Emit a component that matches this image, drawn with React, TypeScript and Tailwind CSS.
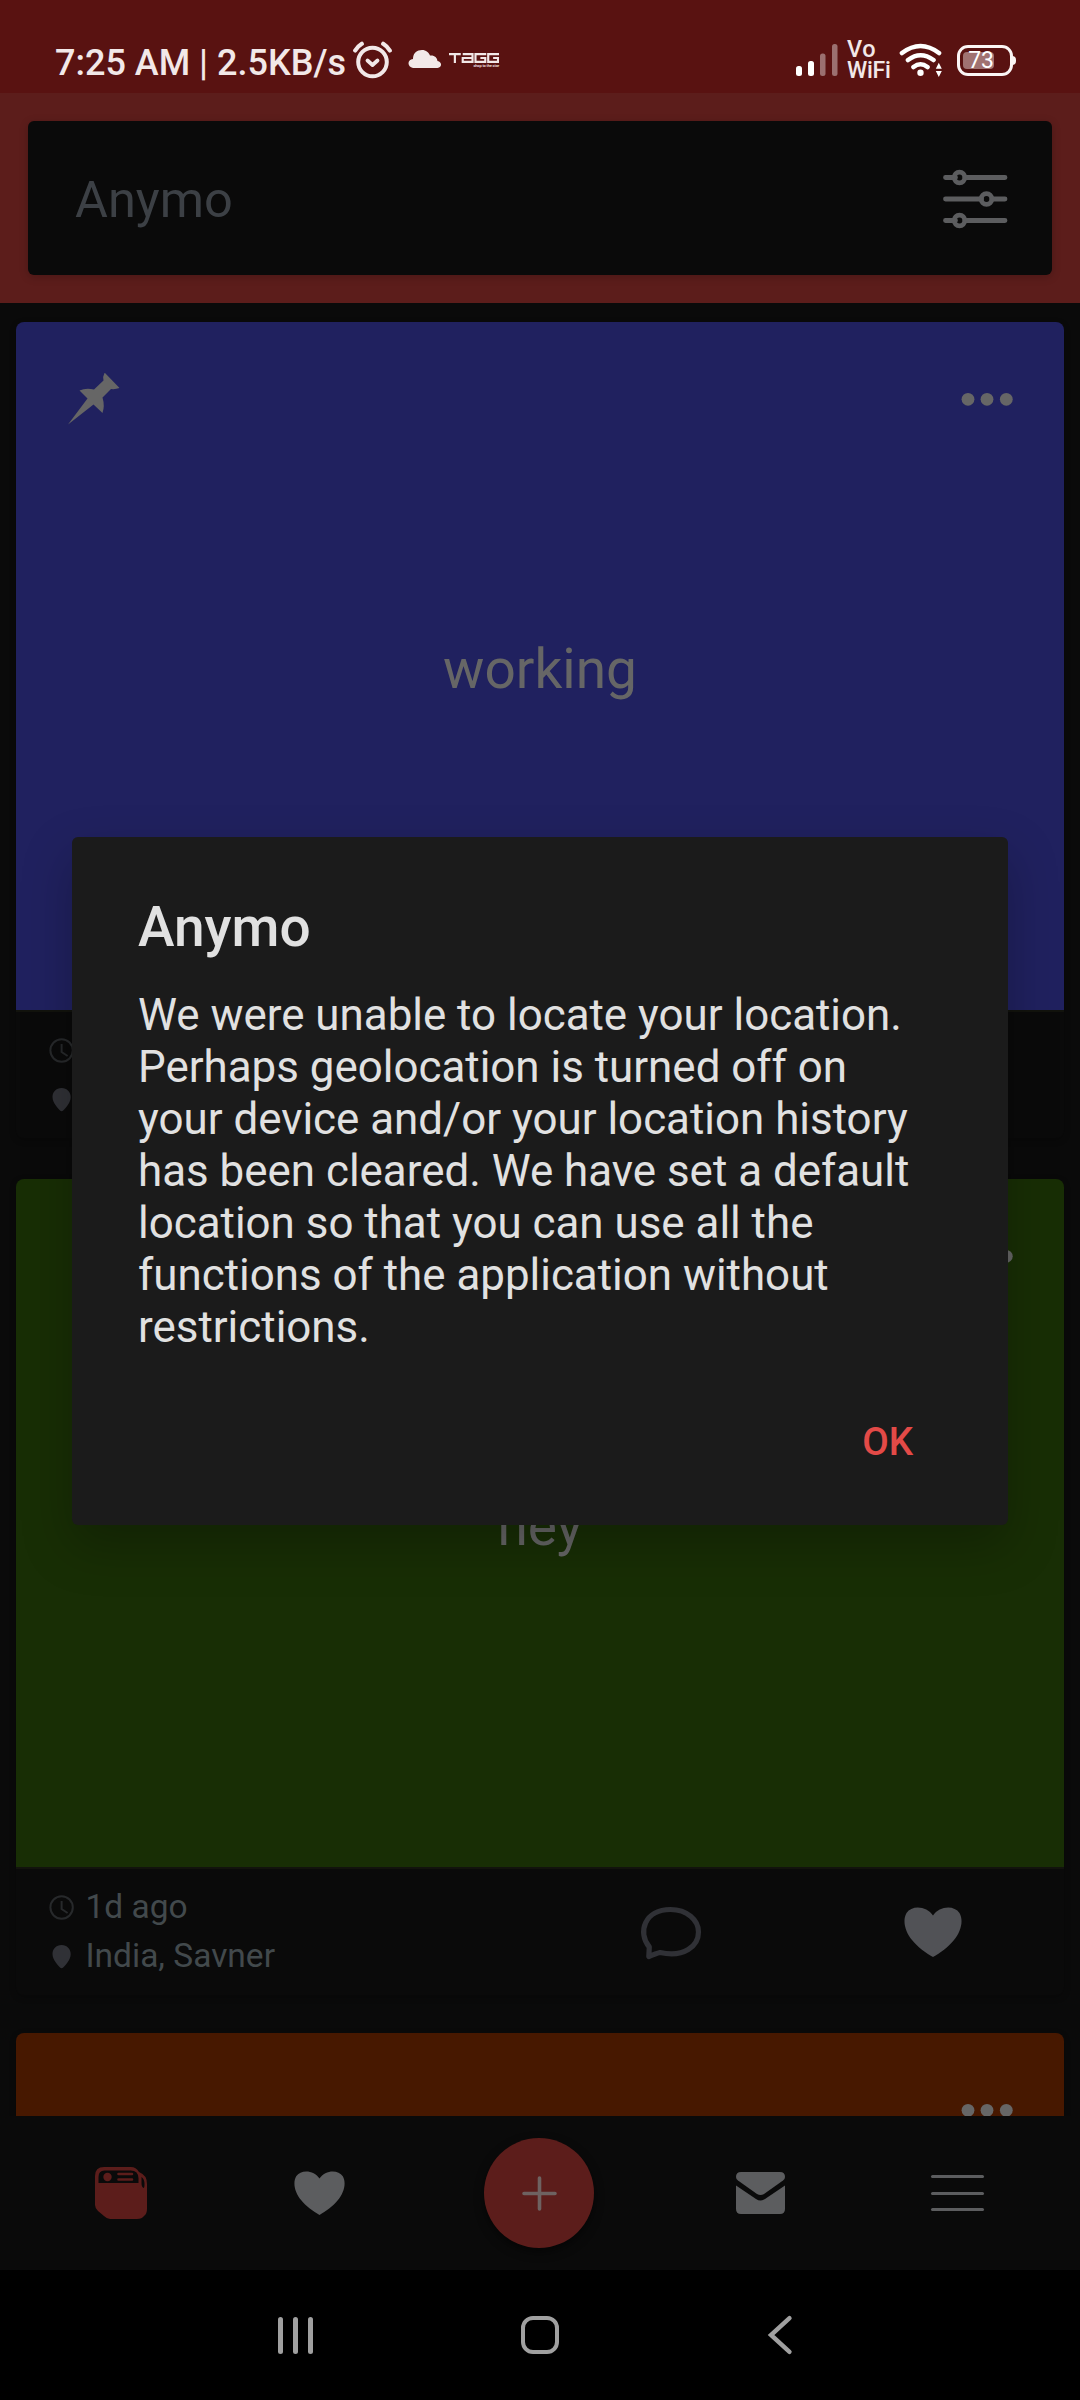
import React from "react";

const cardIcon = "#666666";

function StatusBar() {
  return (
    <div className="flex h-[93px] shrink-0 items-start bg-[#591211] pl-[55px] text-[#f2e8e8]">
      <span className="mt-[42px] w-[298px] whitespace-nowrap text-[36px] leading-[42px] font-medium">
        7:25 AM | 2.5KB/s
      </span>
      <svg className="mt-[40px] h-[40px] w-[40px]" viewBox="0 0 40 40" fill="none" stroke="#f2e8e8" strokeLinecap="round">
        <circle cx="19.5" cy="22" r="14.300" strokeWidth="4" />
        <path d="M14.500 20.500l5 4.500 5-4.500" strokeWidth="3.800" strokeLinejoin="round" />
        <path d="M2.200 10.500Q4.500 6.500 8.800 3.800M36.800 10.500Q34.500 6.500 30.200 3.800" strokeWidth="4.200" />
      </svg>
      <svg className="mt-[49px] ml-[15px] h-[20px] w-[34px]" viewBox="0 0 34 20" fill="#f2e8e8">
        <path d="M5 19C-1 18-1 10.500 5 10C5 4 9 1 14 1c4 0 7 2.500 8 5.500c4.500-.5 7 2 7.500 5.500c5 1 4.500 6.500 0 7z" />
      </svg>
      <div className="mt-[53px] ml-[6px] flex w-[51px] flex-col items-end">
        <svg className="h-[10px] w-[50px]" viewBox="0 0 51 10" fill="none" stroke="#f2e8e8" strokeWidth="2.200">
          <path d="M0 1h12M6 1v9M14 1h10v8H14V5h10M38 1H27v8h10V5h-5M51 1H40v8h10V5h-5" />
        </svg>
        <span className="mt-[1px] h-[4px] text-[4px] leading-[4px] font-medium tracking-[-0.15px] whitespace-nowrap">shop to the star</span>
      </div>
      <svg className="mt-[43px] ml-[296px] h-[34px] w-[44px]" viewBox="0 0 44 34" fill="#ffffff">
        <rect x="1" y="23" width="6" height="10" rx="2.500" />
        <rect x="13" y="18" width="6" height="15" rx="2.500" />
        <rect x="25" y="10.500" width="5.500" height="22.500" rx="2.500" opacity=".4" />
        <rect x="37" y="1" width="5.500" height="32" rx="2.500" opacity=".4" />
      </svg>
      <div className="mt-[39px] ml-[8px] flex w-[44px] flex-col font-medium">
        <span className="text-[23.500px] leading-[21px] tracking-[0.5px]">Vo</span>
        <span className="text-[23px] leading-[21px] tracking-[-0.3px]">WiFi</span>
      </div>
      <svg className="mt-[42px] ml-[8px] h-[36px] w-[46px]" viewBox="0 0 46 36" fill="none" stroke="#fff" strokeWidth="4.600" strokeLinecap="round">
        <path d="M3 11Q21.500-3 40 11M9 18Q21.500 8.500 34.500 18M14.500 25Q21.500 19.500 28.500 25" />
        <circle cx="21.500" cy="30.800" r="3.200" fill="#fff" stroke="none" />
        <path d="M36.800 26.800l3-6 3 6zM36.800 29l3 6 3-6z" fill="#fff" stroke="none" />
      </svg>
      <div className="relative mt-[45px] ml-[12px] flex h-[31px] w-[56px] items-center rounded-[11px] border-[3.500px] border-[#fbf5f5]">
        <div className="ml-[3px] flex h-[17px] w-[31px] items-center justify-end rounded-[4px] bg-[#a07271]">
          <span className="text-[23px] leading-[23px] text-white">73</span>
        </div>
        <div className="absolute top-[8px] -right-[6px] h-[9px] w-[4px] rounded-r-full bg-[#fbf5f5]" />
      </div>
    </div>
  );
}

function SearchHeader() {
  return (
    <div className="h-[210px] shrink-0 bg-[#5c1d1b] px-[28px] pt-[28px]">
      <div className="flex h-[154px] items-center justify-between rounded-[6px] bg-[#0a0a0a] pr-[44px] pl-[47px] shadow-[0_2px_10px_rgba(0,0,0,0.2)]">
        <span className="pt-[3px] text-[50.500px] leading-[58px] text-[#3c4045]">Anymo</span>
        <svg className="h-[64px] w-[66px]" viewBox="0 0 66 64" fill="none" stroke="#5c5d5f" strokeWidth="4.800" strokeLinecap="round">
          <path d="M3.500 11.500h10M23 11.500h40M3.500 33h36M50 33h13M3.500 54.500h10M23 54.500h40" />
          <circle cx="17.500" cy="11.500" r="5.300" />
          <circle cx="44.500" cy="33" r="5.300" />
          <circle cx="17.500" cy="54.500" r="5.300" />
        </svg>
      </div>
    </div>
  );
}

function Pushpin() {
  return (
    <svg className="ml-[52px] h-[52px] w-[52px]" viewBox="0 0 52 52" fill={cardIcon}>
      <path d="M37 0L51.500 15Q47.500 16.500 43 16L34.500 24.500Q37 33 34.500 40L25.500 31.500L0 51.500L19.500 25.500L11.500 17.500Q18 14.500 26 16.500L35.500 7.500Q34.500 3.500 36.500 0z" />
    </svg>
  );
}

function Dots() {
  return (
    <svg className="mr-[50px] ml-auto h-[14px] w-[54px]" viewBox="0 0 54 14" fill={cardIcon}>
      <circle cx="8" cy="7.300" r="6.400" />
      <circle cx="27" cy="7.300" r="6.400" />
      <circle cx="46.300" cy="7.300" r="6.400" />
    </svg>
  );
}

const heart = "M29 8.500C35-1 50-2.500 55.500 6C60 14 56.500 25 50 33C44.500 40 36 46 29 50C22 46 13.500 40 8 33C1.500 25-2 14 2.500 6C8-2.500 23-1 29 8.500z";

type CardProps = { tone: string; pinned?: boolean; text?: string; time?: string; place?: string };

function PostCard({ tone, pinned, text, time, place }: CardProps) {
  return (
    <article className="rounded-[8px] shadow-[0_2px_6px_rgba(0,0,0,0.25)]">
      <div className={`flex h-[688px] flex-col rounded-t-[8px] ${tone}`}>
        <div className="flex h-[154px] items-center">
          {pinned && <Pushpin />}
          <Dots />
        </div>
        <p className="mt-[161px] text-center text-[55px] leading-[64px] text-[#666666]">{text}</p>
      </div>
      <div className="flex h-[128px] border-t-2 border-[#12130d] pl-[33px]">
        <div className="flex w-[510px] flex-col pt-[14px] text-[33.500px] leading-[47px] text-[#42494c]">
          <div className="flex h-[49px] items-center">
            <svg className="h-[26px] w-[26px]" viewBox="0 0 26 26" fill="none" stroke="#27292b" strokeWidth="2">
              <circle cx="12.600" cy="12.500" r="11.200" />
              <path d="M12.600 6v8l6 4" />
            </svg>
            <span className="-mt-[2px] ml-[10.500px]">{time}</span>
          </div>
          <div className="flex h-[49px] items-center">
            <svg className="h-[26px] w-[26px]" viewBox="0 0 26 26" fill="#303136">
              <path d="M12.600 1C7 1 3.500 5 3.500 10C3.500 16 9 21 11 23.500Q12.600 25 14.200 23.500C16.500 21 21.700 16 21.700 10C21.700 5 18 1 12.600 1z" />
            </svg>
            <span className="-mt-[2px] ml-[10.500px]">{place}</span>
          </div>
        </div>
        <svg className="mt-[37px] ml-[80px] h-[54px] w-[64px]" viewBox="0 0 64 54" fill="none" stroke="#303136" strokeWidth="5.200" strokeLinejoin="round">
          <path d="M9.800 50.500L10.300 41C-2 26 6 3.500 31.500 3.500C48 3.500 59.500 14 59.500 26C59.500 40 45 52 21 46.500Q17 47.500 9.800 50.500z" />
        </svg>
        <svg className="mt-[38px] ml-[201px] h-[50px] w-[58px]" viewBox="0 0 58 50" fill="#515256">
          <path d={heart} />
        </svg>
      </div>
    </article>
  );
}

function Dialog() {
  return (
    <div className="absolute top-[837px] left-[72px] flex h-[688px] w-[936px] flex-col rounded-[6px] bg-[#1b1b1b] px-[66px] pt-[58px] shadow-[0_20px_50px_rgba(0,0,0,0.25)]">
      <h2 className="text-[55px] leading-[64px] font-medium text-[#e1e1e1]">Anymo</h2>
      <p className="mt-[30px] text-[43.900px] leading-[52px] whitespace-nowrap text-[#e1e1e1]">
        We were unable to locate your location.
        <br />
        Perhaps geolocation is turned off on
        <br />
        your device and/or your location history
        <br />
        has been cleared. We have set a default
        <br />
        location so that you can use all the
        <br />
        functions of the application without
        <br />
        restrictions.
      </p>
      <button className="mt-[66px] mr-[29px] self-end text-[38.500px] leading-[46px] font-medium text-[#e34a47]">OK</button>
    </div>
  );
}

function TabBar() {
  return (
    <nav className="flex h-[154px] shrink-0 items-center bg-[#0a0a0a]">
      <svg className="ml-[95px] h-[52px] w-[52px]" viewBox="0 0 52 52">
        <path d="M9 0h27q5 0 8 5q8 3 8 12v25q0 5-3 7q-2 3-7 3H15q-3 0-6-3L3 44q-3-3-3-6V9Q0 0 9 0z" fill="#5c1d1b" />
        <path d="M3.500 16V10q0-6.500 6-6.500h26q8 0 8 8V16zM46.500 10q3 2 3 7q0 4-1 4q-2-1-2-5z" fill="#0a0a0a" />
        <circle cx="12.500" cy="10" r="4.200" fill="#5c1d1b" />
        <path d="M23.500 7h13.500M23.500 12.500h13.500" stroke="#5c1d1b" strokeWidth="2.600" strokeLinecap="round" />
      </svg>
      <svg className="ml-[147px] h-[44px] w-[51px]" viewBox="0 0 58 50" fill="#5c5d5f">
        <path d={heart} />
      </svg>
      <div className="ml-[139px] flex h-[110px] w-[110px] items-center justify-center rounded-full bg-[#5c1d1b] shadow-[0_4px_10px_rgba(0,0,0,0.5)]">
        <svg className="h-[36px] w-[36px]" viewBox="0 0 36 36" stroke="#6e6261" strokeWidth="3.600" strokeLinecap="round">
          <path d="M3 18.500h31M18.500 3v31" />
        </svg>
      </div>
      <svg className="ml-[142px] h-[42px] w-[49px]" viewBox="0 0 49 42" fill="#5c5d5f">
        <path d="M5 0h39q5 0 5 5q0 2-2 3.500L28 22q-3.500 2-7 0L2 8.500Q0 7 0 5Q0 0 5 0z" />
        <path d="M0 13.500L20 27q4.500 3 9 0L49 13.500V37q0 5-5 5H5q-5 0-5-5z" />
      </svg>
      <div className="ml-[146px] flex w-[53px] flex-col gap-[13.500px]">
        <div className="h-[3px] rounded-full bg-[#5c5d5f]" />
        <div className="h-[3px] rounded-full bg-[#5c5d5f]" />
        <div className="h-[3px] rounded-full bg-[#5c5d5f]" />
      </div>
    </nav>
  );
}

function SystemNav() {
  return (
    <div className="flex h-[130px] shrink-0 items-center bg-black">
      <div className="ml-[278px] flex gap-[10.500px]">
        <div className="h-[37px] w-[4.600px] rounded-full bg-[#a0a0a0]" />
        <div className="h-[37px] w-[4.600px] rounded-full bg-[#a0a0a0]" />
        <div className="h-[37px] w-[4.600px] rounded-full bg-[#a0a0a0]" />
      </div>
      <div className="ml-[208px] h-[38px] w-[38px] rounded-[12px] border-4 border-[#a0a0a0]" />
      <svg className="ml-[208px] h-[40px] w-[26px]" viewBox="0 0 26 40" fill="none" stroke="#a0a0a0" strokeWidth="4.400" strokeLinecap="round">
        <path d="M22.500 3.200L4 20l18.500 16.800" />
      </svg>
    </div>
  );
}

export default function App() {
  return (
    <div className="relative flex h-[2400px] w-[1080px] flex-col overflow-hidden bg-[#0a0a0a] font-['Roboto',sans-serif]">
      <StatusBar />
      <SearchHeader />
      <main className="flex min-h-0 flex-1 flex-col overflow-hidden px-[16px] pt-[19px]">
        <PostCard tone="bg-[#20215f]" pinned text="working" />
        <div className="h-[41px] shrink-0" />
        <PostCard tone="bg-[#182e05]" text="hey" time="1d ago" place="India, Savner" />
        <div className="h-[38px] shrink-0" />
        <PostCard tone="bg-[#471800]" />
      </main>
      <TabBar />
      <SystemNav />
      <Dialog />
    </div>
  );
}
